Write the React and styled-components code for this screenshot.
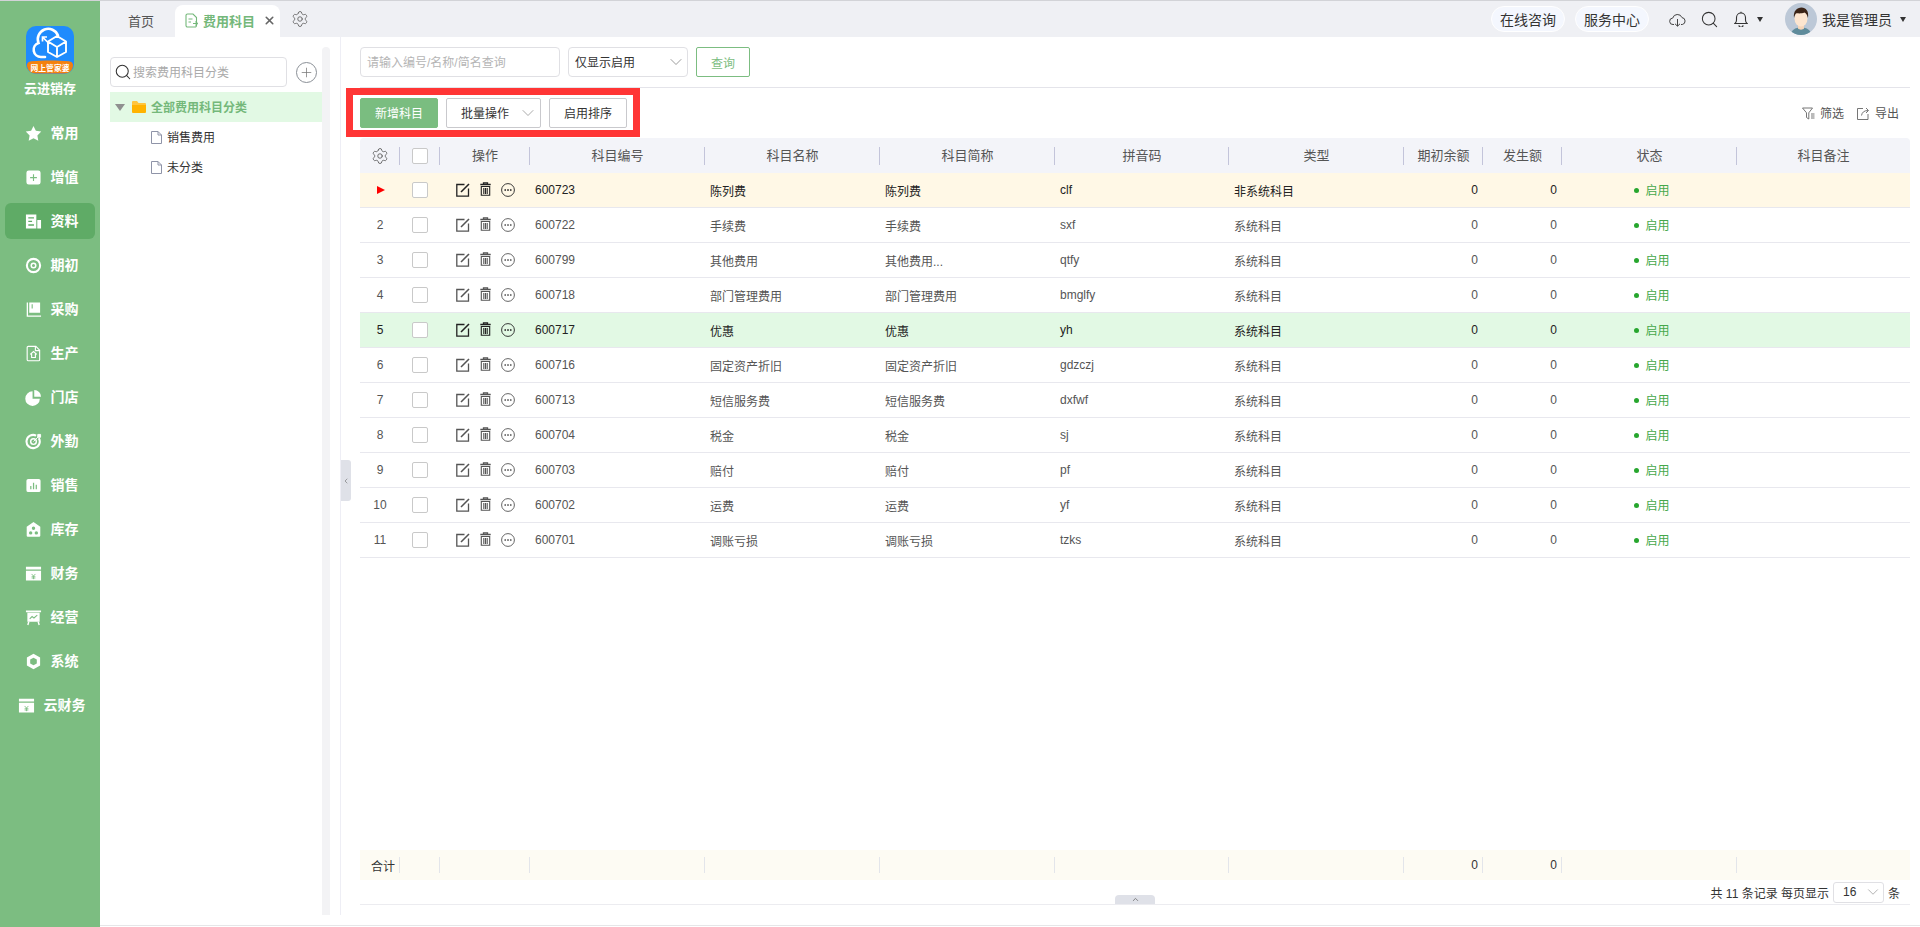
import React from "react";
import styled, { createGlobalStyle } from "styled-components";
import { ChevronDown, ChevronLeft, ChevronUp, Settings, Search, X, Plus } from "lucide-react";

const GlobalStyle = createGlobalStyle`
  html, body {
    margin: 0;
    padding: 0;
    background: #fff;
    overflow: hidden;
  }
  * {
    box-sizing: border-box;
  }
  body {
    font-family: "Liberation Sans", "Noto Sans CJK SC", sans-serif;
    font-size: 12px;
    color: #333;
  }
`;

const Page = styled.div`
  display: flex;
  width: 1920px;
  height: 927px;
  border-top: 1px solid #d2d3d7;
  overflow: hidden;
`;

const Sidebar = styled.aside`
  width: 100px;
  flex-shrink: 0;
  display: flex;
  flex-direction: column;
  align-items: center;
  background: #7cbd81;
  padding-top: 25px;
`;

const LogoName = styled.div`
  margin-top: 5px;
  margin-bottom: 12px;
  height: 20px;
  line-height: 20px;
  font-size: 13px;
  font-weight: 700;
  color: #fff;
`;

const NavItem = styled.div`
  width: 90px;
  height: 36px;
  margin: 4px 0;
  padding: 0 0 2px 3px;
  display: flex;
  align-items: center;
  justify-content: center;
  gap: 9px;
  border-radius: 6px;
  color: #fff;
  font-size: 14px;
  font-weight: 700;
  background: ${(props) => (props.$active ? "#5fab66" : "transparent")};
  & svg {
    margin-top: 2px;
  }
`;

const Main = styled.div`
  flex: 1;
  min-width: 0;
  display: flex;
  flex-direction: column;
`;

const TopBar = styled.header`
  height: 36px;
  flex-shrink: 0;
  display: flex;
  align-items: flex-end;
  padding-left: 28px;
  background: #eff0f4;
`;

const Tab = styled.div`
  height: 32px;
  display: flex;
  align-items: center;
  font-size: 13px;
  color: #555;
  padding-bottom: 1px;
`;

const ActiveTab = styled(Tab)`
  width: 105px;
  margin-left: 21px;
  padding-left: 10px;
  background: #fff;
  border-radius: 8px 8px 0 0;
  color: #74b87a;
  font-weight: 700;
  gap: 5px;
`;

const TabClose = styled.span`
  display: flex;
  margin-left: 3px;
  color: #666;
`;

const TabGear = styled.div`
  display: flex;
  height: 36px;
  align-items: center;
  margin-left: 11px;
  color: #666;
`;

const TopRight = styled.div`
  margin-left: auto;
  height: 36px;
  display: flex;
  align-items: center;
  color: #333;
`;

const Pill = styled.div`
  width: 74px;
  height: 26px;
  margin-right: 10px;
  display: flex;
  align-items: center;
  justify-content: center;
  border: 1px solid #fff;
  border-radius: 13px;
  background: #f4f7fe;
  font-size: 14px;
`;

const TopIcon = styled.span`
  display: flex;
  margin-left: ${(props) => props.$left || 0}px;
`;

const Caret = styled.span`
  width: 0;
  height: 0;
  margin-left: ${(props) => props.$left}px;
  border-left: 3.5px solid transparent;
  border-right: 3.5px solid transparent;
  border-top: 5px solid #333;
`;

const UserName = styled.span`
  margin-left: 5px;
  font-size: 14px;
`;

const Content = styled.div`
  position: relative;
  height: 878px;
  flex-shrink: 0;
  display: flex;
`;

const BottomStrip = styled.div`
  height: 11px;
  flex-shrink: 0;
  border-bottom: 1px solid #e6e6e8;
`;

const TreePanel = styled.div`
  width: 241px;
  flex-shrink: 0;
  display: flex;
  padding: 10px 10px 0 10px;
  border-right: 1px solid #eeeef5;
`;

const TreeBody = styled.div`
  width: 212px;
  padding-top: 10px;
`;

const ScrollTrack = styled.div`
  width: 8px;
  background: #f3f3f5;
  border-radius: 4px 4px 0 0;
`;

const TreeSearchRow = styled.div`
  display: flex;
  align-items: center;
  height: 30px;
  gap: 9px;
`;

const TreeSearch = styled.div`
  width: 177px;
  height: 30px;
  display: flex;
  align-items: center;
  gap: 1px;
  padding: 0 0 2px 3px;
  border: 1px solid #e0e0e4;
  border-radius: 4px;
  color: #aaa;
  & svg {
    margin-top: 2px;
  }
`;

const AddCircle = styled.div`
  width: 21px;
  height: 21px;
  display: flex;
  align-items: center;
  justify-content: center;
  border: 1.3px solid #8a8f96;
  border-radius: 50%;
  color: #777;
`;

const TreeRow = styled.div`
  height: 30px;
  display: flex;
  align-items: center;
  padding-left: ${(props) => props.$indent}px;
  padding-bottom: 2px;
  gap: 5px;
  color: ${(props) => (props.$selected ? "#74b87a" : "#333")};
  font-weight: ${(props) => (props.$selected ? 700 : 400)};
  background: ${(props) => (props.$selected ? "#e2f9e4" : "transparent")};
  & svg {
    margin-top: 2px;
  }
`;

const TreeRowFirst = styled(TreeRow)`
  margin-top: 5px;
`;

const TreeCaret = styled.span`
  width: 0;
  height: 0;
  margin: 2px 2px 0 0;
  border-left: 5px solid transparent;
  border-right: 5px solid transparent;
  border-top: 7px solid #8f8f8f;
`;

const CollapseHandle = styled.div`
  position: absolute;
  left: 241px;
  top: 423px;
  width: 10px;
  height: 41px;
  display: flex;
  align-items: center;
  justify-content: center;
  background: #dfe1e8;
  border-radius: 0 3px 3px 0;
  color: #777;
`;

const ListPanel = styled.div`
  flex: 1;
  min-width: 0;
  display: flex;
  flex-direction: column;
  padding: 0 10px 10px 19px;
`;

const FilterBar = styled.div`
  height: 51px;
  flex-shrink: 0;
  display: flex;
  align-items: flex-start;
  padding-top: 10px;
  gap: 8px;
  border-bottom: 1px solid #e4e4ea;
`;

const SearchInput = styled.div`
  width: 200px;
  height: 30px;
  display: flex;
  align-items: center;
  padding: 0 0 2px 6px;
  border: 1px solid #e0e0e4;
  border-radius: 4px;
  color: #b5b5b5;
`;

const SelectBox = styled.div`
  width: 120px;
  height: 30px;
  display: flex;
  align-items: center;
  justify-content: space-between;
  padding: 0 1px 2px 6px;
  border: 1px solid #e0e0e4;
  border-radius: 4px;
  color: #333;
  & svg {
    margin-top: 2px;
    color: #888;
  }
`;

const QueryButton = styled.div`
  width: 54px;
  height: 30px;
  display: flex;
  align-items: center;
  justify-content: center;
  border: 1px solid #7cbd81;
  border-radius: 2px;
  color: #7cbd81;
`;

const Toolbar = styled.div`
  position: relative;
  height: 50px;
  flex-shrink: 0;
  display: flex;
  align-items: center;
  gap: 8px;
`;

const RedFrame = styled.div`
  position: absolute;
  left: -14px;
  top: 0;
  width: 294px;
  height: 49px;
  border: 7px solid #ff3535;
  pointer-events: none;
`;

const ToolButton = styled.div`
  width: ${(props) => props.$width}px;
  height: 30px;
  display: flex;
  align-items: center;
  justify-content: center;
  padding-bottom: 2px;
  border: 1px solid ${(props) => (props.$primary ? "#7abd80" : "#c9c9cd")};
  border-radius: 2px;
  background: ${(props) => (props.$primary ? "#7abd80" : "#fff")};
  color: ${(props) => (props.$primary ? "#fff" : "#333")};
`;

const ToolSelect = styled(ToolButton)`
  justify-content: flex-start;
  gap: 9px;
  padding-left: 14px;
  & svg {
    margin-top: 2px;
    color: #999;
  }
`;

const ToolLinks = styled.div`
  margin-left: auto;
  display: flex;
  align-items: center;
  margin-right: 11px;
  padding-bottom: 2px;
  color: #555;
  & svg {
    margin-top: 2px;
  }
`;

const ToolLink = styled.span`
  display: flex;
  align-items: center;
  gap: 5px;
  margin-left: 13px;
`;

const columns = "40px 40px 90px 175px 175px 175px 174px 175px 79px 79px 175px 1fr";

const TableHead = styled.div`
  height: 35px;
  flex-shrink: 0;
  display: grid;
  grid-template-columns: ${columns};
  align-items: center;
  background: #f3f4f9;
  border-radius: 4px 4px 0 0;
  font-size: 13px;
  color: #555;
`;

const HeadCell = styled.div`
  position: relative;
  height: 18px;
  line-height: 18px;
  display: flex;
  align-items: center;
  justify-content: center;
  &:not(:last-child)::after {
    content: "";
    position: absolute;
    right: 0;
    top: 0;
    width: 1px;
    height: 18px;
    background: #c3c4da;
  }
`;

const TableBody = styled.div`
  flex: 1;
  min-height: 0;
`;

const Row = styled.div`
  height: 35px;
  display: grid;
  grid-template-columns: ${columns};
  align-items: center;
  border-bottom: 1px solid #e8e8ee;
  color: ${(props) => (props.$tone ? "#222" : "#555")};
  background: ${(props) =>
    props.$tone === "current" ? "#fff8e6" : props.$tone === "picked" ? "#e2f9e4" : "#fff"};
`;

const Cell = styled.div`
  padding: 0 ${(props) => (props.$align === "right" ? 5 : 0)}px 0
    ${(props) => (props.$align === "left" ? 5 : 0)}px;
  display: flex;
  align-items: center;
  justify-content: ${(props) =>
    props.$align === "right" ? "flex-end" : props.$align === "left" ? "flex-start" : "center"};
  white-space: nowrap;
`;

const Checkbox = styled.span`
  width: 16px;
  height: 16px;
  border: 1px solid #c9c9c9;
  border-radius: 2px;
  background: #fff;
`;

const Pointer = styled.span`
  width: 0;
  height: 0;
  margin-left: 1px;
  border-top: 4px solid transparent;
  border-bottom: 4px solid transparent;
  border-left: 8px solid #f00;
`;

const Actions = styled.div`
  display: flex;
  align-items: center;
  gap: 10px;
  padding-left: 16px;
  color: ${(props) => (props.$tone ? "#222" : "#555")};
  & svg:nth-child(2) {
    margin-top: -2px;
  }
`;

const StatusText = styled.span`
  display: flex;
  align-items: center;
  gap: 6px;
  padding: 0 0 2px 5px;
  color: #45a84b;
`;

const StatusDot = styled.i`
  width: 5px;
  height: 5px;
  margin-top: 2px;
  border-radius: 50%;
  background: #27a62e;
`;

const SumRow = styled.div`
  height: 30px;
  flex-shrink: 0;
  display: grid;
  grid-template-columns: ${columns};
  align-items: center;
  background: #fdfbf3;
  color: #333;
`;

const SumCell = styled(Cell)`
  position: relative;
  height: 16px;
  &:first-child {
    padding-left: 6px;
  }
  &:not(:last-child)::after {
    content: "";
    position: absolute;
    right: 0;
    top: 0;
    width: 1px;
    height: 16px;
    background: #e3e5ea;
  }
`;

const Pagination = styled.div`
  position: relative;
  height: 25px;
  flex-shrink: 0;
  display: flex;
  align-items: center;
  justify-content: flex-end;
  padding-right: 10px;
  border-bottom: 1px solid #ececf0;
  color: #333;
`;

const PageSize = styled.div`
  width: 51px;
  height: 21px;
  margin: 0 4px;
  display: flex;
  align-items: center;
  justify-content: space-between;
  padding: 0 1px 0 9px;
  border: 1px solid #e0e0e4;
  border-radius: 3px;
  & svg {
    color: #999;
  }
`;

const FoldHandle = styled.div`
  position: absolute;
  left: 755px;
  bottom: 0;
  width: 40px;
  height: 9px;
  display: flex;
  align-items: center;
  justify-content: center;
  background: #dfe1e8;
  border-radius: 4px 4px 0 0;
  color: #666;
`;

const NavGlyph = ({ children }) => (
  <svg width="17" height="17" viewBox="0 0 18 18" fill="#fff" fillRule="evenodd">
    {children}
  </svg>
);

const Yen = () => (
  <path d="M7 9.5l2 2.2 2-2.2M9 11.7V15M7 12.4h4M7 13.8h4" stroke="#7cbd81" strokeWidth="0.9" fill="none" />
);

const navItems = [
  { label: "常用", icon: <path d="M9 1l2.5 5.2 5.7.8-4.1 4 1 5.7L9 14l-5.1 2.7 1-5.7L.8 7l5.7-.8z" /> },
  {
    label: "增值",
    icon: <path d="M4 1.5h10A2.5 2.5 0 0 1 16.5 4v10a2.5 2.5 0 0 1-2.5 2.5H4A2.5 2.5 0 0 1 1.5 14V4A2.5 2.5 0 0 1 4 1.5zM8.4 5.5v3h-3v1.2h3v3h1.2v-3h3V8.5h-3v-3z" />,
  },
  {
    label: "资料",
    active: true,
    icon: <path d="M1 1.5h11v15H1zM3.5 4.5v1.4h6V4.5zM3.5 8.2v1.4h4V8.2zM3.5 12v1.4h6V12zM13 7.5h4v9h-4z" />,
  },
  {
    label: "期初",
    icon: (
      <>
        <circle cx="9" cy="9" r="7" fill="none" stroke="#fff" strokeWidth="2.2" />
        <circle cx="9" cy="9" r="2.4" fill="none" stroke="#fff" strokeWidth="1.6" />
      </>
    ),
  },
  {
    label: "采购",
    icon: (
      <>
        <path d="M4.5 1.5h11.500v11H4.500zM7 3.500v4.500h1.200V3.500z" />
        <path d="M2.500 1.500v14.500H17" fill="none" stroke="#fff" strokeWidth="1.4" />
      </>
    ),
  },
  {
    label: "生产",
    icon: (
      <g fill="none" stroke="#fff" strokeWidth="1.2">
        <path d="M3.500 1.500h8l4 4v10a1.200 1.200 0 0 1-1.200 1.200H3.500a1.200 1.200 0 0 1-1.200-1.200V2.700a1.200 1.200 0 0 1 1.200-1.200z" />
        <path d="M11 1.500v4.500h4.500M5.500 10l3.500-3 3.500 3M7 9.200v4h4v-4" />
      </g>
    ),
  },
  {
    label: "门店",
    icon: (
      <>
        <path d="M8 2.500a7.700 7.700 0 1 0 7.700 7.700H8z" />
        <path d="M9.800 1a7.200 7.200 0 0 1 7.200 7.200H9.800z" />
      </>
    ),
  },
  {
    label: "外勤",
    icon: (
      <>
        <path d="M14.600 5.400a7 7 0 1 1-2.800-2.600" fill="none" stroke="#fff" strokeWidth="2.2" />
        <circle cx="9" cy="9" r="3" fill="none" stroke="#fff" strokeWidth="1.5" />
        <path d="M9 9l6-6M13.500 1.500h3v3h-3z" stroke="#fff" strokeWidth="1" />
      </>
    ),
  },
  {
    label: "销售",
    icon: <path d="M3.500 2h11a2 2 0 0 1 2 2v10a2 2 0 0 1-2 2h-11a2 2 0 0 1-2-2V4a2 2 0 0 1 2-2zM5.500 9.500V13h1.300V9.500zM8.400 6v7h1.300V6zM11.300 8.300V13h1.300V8.300z" />,
  },
  {
    label: "库存",
    icon: (
      <path d="M9 1l7.200 5.200v9.300a1.200 1.200 0 0 1-1.200 1.200H3a1.200 1.200 0 0 1-1.200-1.200V6.200zM9 5.800a1.800 1.800 0 1 0 0 3.600 1.800 1.800 0 0 0 0-3.600zM6 10.800a1.800 1.800 0 1 0 0 3.600 1.800 1.800 0 0 0 0-3.600zM12 10.800a1.800 1.800 0 1 0 0 3.600 1.800 1.800 0 0 0 0-3.600z" />
    ),
  },
  {
    label: "财务",
    icon: (
      <>
        <path d="M1 1.800h16v3H1zM1 6h16v10.500H1z" />
        <Yen />
      </>
    ),
  },
  {
    label: "经营",
    icon: (
      <>
        <path d="M1 1.500h16v2H1zM2.500 4h13v9.500h-13z" />
        <path d="M5 10.500l2.500-2.500 2 1.500L13 6.500" fill="none" stroke="#7cbd81" strokeWidth="1.1" />
        <path d="M4 13.500l-1 3.500M14 13.500l1 3.500" stroke="#fff" strokeWidth="1.5" />
      </>
    ),
  },
  {
    label: "系统",
    icon: <path d="M9 .8l7 4v8.400l-7 4-7-4V4.800zM9 5L5.500 7v4L9 13l3.500-2V7z" />,
  },
  {
    label: "云财务",
    icon: (
      <>
        <path d="M1 1.800h16v3H1zM1 6h16v10.500H1z" />
        <Yen />
      </>
    ),
  },
];

const rows = [
  { no: "600723", name: "陈列费", short: "陈列费", py: "clf", type: "非系统科目", tone: "current" },
  { no: "600722", name: "手续费", short: "手续费", py: "sxf", type: "系统科目" },
  { no: "600799", name: "其他费用", short: "其他费用...", py: "qtfy", type: "系统科目" },
  { no: "600718", name: "部门管理费用", short: "部门管理费用", py: "bmglfy", type: "系统科目" },
  { no: "600717", name: "优惠", short: "优惠", py: "yh", type: "系统科目", tone: "picked" },
  { no: "600716", name: "固定资产折旧", short: "固定资产折旧", py: "gdzczj", type: "系统科目" },
  { no: "600713", name: "短信服务费", short: "短信服务费", py: "dxfwf", type: "系统科目" },
  { no: "600704", name: "税金", short: "税金", py: "sj", type: "系统科目" },
  { no: "600703", name: "赔付", short: "赔付", py: "pf", type: "系统科目" },
  { no: "600702", name: "运费", short: "运费", py: "yf", type: "系统科目" },
  { no: "600701", name: "调账亏损", short: "调账亏损", py: "tzks", type: "系统科目" },
];

const headers = ["", "", "操作", "科目编号", "科目名称", "科目简称", "拼音码", "类型", "期初余额", "发生额", "状态", "科目备注"];

const Logo = () => (
  <svg width="48" height="48" viewBox="0 0 48 48">
    <rect width="48" height="48" rx="10" fill="#1f8bfd" />
    <path d="M1 39c0-2 1.500-3.500 4-3.800 12-1 26-1 38 0 2.500.3 4 1.800 4 3.800 0 5-4 8.500-9 8.500H10c-5 0-9-3.500-9-8.500z" fill="#f4810e" />
    <path
      d="M19 31h-4a7.200 7.200 0 0 1-2.500-14A10 10 0 0 1 32 9.500"
      fill="none"
      stroke="#fff"
      strokeWidth="2.600"
      strokeLinecap="round"
    />
    <path d="M22 15.500l9-5.500 9 5.500V26l-9 5-9-5zM22 15.500l9 5.500 9-5.500M31 21v10" fill="none" stroke="#fff" strokeWidth="1.900" strokeLinejoin="round" />
    <path d="M21 11h-4.500v4.500M16.500 11l7 7" fill="none" stroke="#fff" strokeWidth="1.700" />
    <text x="24" y="44.500" textAnchor="middle" fontSize="7.800" fontWeight="700" fill="#fff">
      网上管家婆
    </text>
  </svg>
);

const Avatar = () => (
  <svg width="32" height="32" viewBox="0 0 32 32">
    <defs>
      <clipPath id="avatar-clip">
        <circle cx="16" cy="16" r="16" />
      </clipPath>
    </defs>
    <g clipPath="url(#avatar-clip)">
      <rect width="32" height="32" fill="#bcc8d7" />
      <path d="M6 32c0-5 4-7.500 10-7.500S26 27 26 32z" fill="#5f8b9b" />
      <path d="M13 21h6v4.500c-1 1.500-5 1.500-6 0z" fill="#f6d6ba" />
      <ellipse cx="16" cy="15.500" rx="6.500" ry="8" fill="#fde5cf" />
      <path d="M9 15c-1-7 3-10.500 7.500-10.500S24 8 23 15c-.8-3-2-5-3.500-5.500C16 11 12 10 11 10.500 10 11.500 9.500 13 9 15z" fill="#3b2417" />
    </g>
  </svg>
);

const FileTabIcon = () => (
  <svg width="13" height="15" viewBox="0 0 13 15" fill="none" stroke="#74b87a" strokeWidth="1.100">
    <path d="M8 1H2.500A1.500 1.500 0 0 0 1 2.500v10A1.500 1.500 0 0 0 2.500 14H10a1.500 1.500 0 0 0 1.500-1.500V4.500z" />
    <path d="M3.500 6h4M3.500 9h2.500M8 10.500h4M10.500 8.500l2 2-2 2" />
  </svg>
);

const CloudIcon = () => (
  <svg width="17" height="15" viewBox="0 0 17 15" fill="none" stroke="#444" strokeWidth="1">
    <path d="M5 12.500H4a3.200 3.200 0 0 1-.3-6.400A4.900 4.900 0 0 1 13 5.600a3.500 3.500 0 0 1 .3 6.900H12" />
    <path d="M8.500 7v7M6 11.800l2.500 2.400 2.500-2.400" />
  </svg>
);

const BellIcon = () => (
  <svg width="14" height="16" viewBox="0 0 14 16" fill="none" stroke="#333" strokeWidth="1.100">
    <path d="M1 12.500c1.200-1 1.500-2 1.500-3.500V6.500a4.500 4.500 0 0 1 9 0V9c0 1.500.3 2.500 1.500 3.500z" />
    <path d="M5 14.300a2 2 0 0 0 4 0M7 .8V2" />
  </svg>
);

const FolderIcon = () => (
  <svg width="14" height="12" viewBox="0 0 14 12">
    <path d="M0 1a1 1 0 0 1 1-1h4l1.500 2H13a1 1 0 0 1 1 1v1H0z" fill="#ffc53d" />
    <path d="M0 4h14v7a1 1 0 0 1-1 1H1a1 1 0 0 1-1-1z" fill="#ffb300" />
  </svg>
);

const PageIcon = () => (
  <svg width="11" height="13" viewBox="0 0 11 13" fill="none" stroke="#8f94a8" strokeWidth="1">
    <path d="M.5.500h6.500l3.500 3.500v8.500H.5z" />
    <path d="M7 .5V4h3.500" />
  </svg>
);

const EditIcon = () => (
  <svg width="14" height="14" viewBox="0 0 14 14" fill="none" stroke="currentColor" strokeWidth="1.300">
    <path d="M8.500 1.500H.8v11.700h11.700V5.500" />
    <path d="M5 9l8-8" strokeWidth="1.600" />
  </svg>
);

const TrashIcon = () => (
  <svg width="11" height="14" viewBox="0 0 11 14" fill="none" stroke="currentColor" strokeWidth="1.100">
    <path d="M3.500 2V.8h4V2M.3 2.500h10.400" strokeWidth="1.300" />
    <path d="M1.300 4.500h8.400v8.800H1.300zM3.800 6v6M5.500 6v6M7.200 6v6" />
  </svg>
);

const MoreIcon = () => (
  <svg width="14" height="14" viewBox="0 0 14 14" fill="none" stroke="currentColor" strokeWidth="0.900">
    <circle cx="7" cy="7" r="6.400" />
    <circle cx="4.200" cy="7" r="0.500" fill="currentColor" />
    <circle cx="7" cy="7" r="0.500" fill="currentColor" />
    <circle cx="9.800" cy="7" r="0.500" fill="currentColor" />
  </svg>
);

const FilterIcon = () => (
  <svg width="13" height="13" viewBox="0 0 13 13" fill="none" stroke="#666" strokeWidth="0.900">
    <path d="M.5 1h10L6.800 5.800V12L4.500 10.500V5.800zM9 7h3.500M9 9h3.500M9 11h3.500" />
  </svg>
);

const ExportIcon = () => (
  <svg width="13" height="13" viewBox="0 0 13 13" fill="none" stroke="#666" strokeWidth="0.900">
    <path d="M6 1.500H.5v11h10.500V7" />
    <path d="M4.500 8.500c.5-3 2.500-5 6.500-5M9 1l2.500 2.500L9 6" />
  </svg>
);

const App = () => {
  return (
    <>
      <GlobalStyle />
      <Page>
        <Sidebar>
          <Logo />
          <LogoName>云进销存</LogoName>
          {navItems.map((item) => (
            <NavItem key={item.label} $active={item.active}>
              <NavGlyph>{item.icon}</NavGlyph>
              {item.label}
            </NavItem>
          ))}
        </Sidebar>
        <Main>
          <TopBar>
            <Tab>首页</Tab>
            <ActiveTab>
              <FileTabIcon />
              费用科目
              <TabClose>
                <X size={13} strokeWidth={3} />
              </TabClose>
            </ActiveTab>
            <TabGear>
              <Settings size={18} strokeWidth={1.2} />
            </TabGear>
            <TopRight>
              <Pill>在线咨询</Pill>
              <Pill>服务中心</Pill>
              <TopIcon $left={10}>
                <CloudIcon />
              </TopIcon>
              <TopIcon $left={14}>
                <Search size={19} strokeWidth={1.3} />
              </TopIcon>
              <TopIcon $left={15}>
                <BellIcon />
              </TopIcon>
              <Caret $left={9} />
              <TopIcon $left={22}>
                <Avatar />
              </TopIcon>
              <UserName>我是管理员</UserName>
              <Caret $left={8} />
              <TopIcon $left={14} />
            </TopRight>
          </TopBar>
          <Content>
            <TreePanel>
              <TreeBody>
                <TreeSearchRow>
                  <TreeSearch>
                    <Search size={18} strokeWidth={1.4} color="#333" />
                    搜索费用科目分类
                  </TreeSearch>
                  <AddCircle>
                    <Plus size={15} strokeWidth={1.2} />
                  </AddCircle>
                </TreeSearchRow>
                <TreeRowFirst $indent={5} $selected>
                  <TreeCaret />
                  <FolderIcon />
                  全部费用科目分类
                </TreeRowFirst>
                <TreeRow $indent={41}>
                  <PageIcon />
                  销售费用
                </TreeRow>
                <TreeRow $indent={41}>
                  <PageIcon />
                  未分类
                </TreeRow>
              </TreeBody>
              <ScrollTrack />
            </TreePanel>
            <CollapseHandle>
              <ChevronLeft size={8} strokeWidth={2} />
            </CollapseHandle>
            <ListPanel>
              <FilterBar>
                <SearchInput>请输入编号/名称/简名查询</SearchInput>
                <SelectBox>
                  仅显示启用
                  <ChevronDown size={20} strokeWidth={1} />
                </SelectBox>
                <QueryButton>查询</QueryButton>
              </FilterBar>
              <Toolbar>
                <ToolButton $width={78} $primary>
                  新增科目
                </ToolButton>
                <ToolSelect $width={95}>
                  批量操作
                  <ChevronDown size={20} strokeWidth={1} />
                </ToolSelect>
                <ToolButton $width={78}>启用排序</ToolButton>
                <RedFrame />
                <ToolLinks>
                  <ToolLink>
                    <FilterIcon />
                    筛选
                  </ToolLink>
                  <ToolLink>
                    <ExportIcon />
                    导出
                  </ToolLink>
                </ToolLinks>
              </Toolbar>
              <TableHead>
                {headers.map((title, index) => (
                  <HeadCell key={index}>
                    {index === 0 && <Settings size={18} strokeWidth={1.1} />}
                    {index === 1 && <Checkbox />}
                    {title}
                  </HeadCell>
                ))}
              </TableHead>
              <TableBody>
                {rows.map((row, index) => (
                  <Row key={row.no} $tone={row.tone}>
                    <Cell>{index === 0 ? <Pointer /> : index + 1}</Cell>
                    <Cell>
                      <Checkbox />
                    </Cell>
                    <Actions $tone={row.tone}>
                      <EditIcon />
                      <TrashIcon />
                      <MoreIcon />
                    </Actions>
                    <Cell $align="left">{row.no}</Cell>
                    <Cell $align="left">{row.name}</Cell>
                    <Cell $align="left">{row.short}</Cell>
                    <Cell $align="left">{row.py}</Cell>
                    <Cell $align="left">{row.type}</Cell>
                    <Cell $align="right">0</Cell>
                    <Cell $align="right">0</Cell>
                    <Cell>
                      <StatusText>
                        <StatusDot />
                        启用
                      </StatusText>
                    </Cell>
                    <Cell />
                  </Row>
                ))}
              </TableBody>
              <SumRow>
                <SumCell>合计</SumCell>
                <SumCell />
                <SumCell />
                <SumCell />
                <SumCell />
                <SumCell />
                <SumCell />
                <SumCell />
                <SumCell $align="right">0</SumCell>
                <SumCell $align="right">0</SumCell>
                <SumCell />
                <SumCell />
              </SumRow>
              <Pagination>
                <FoldHandle>
                  <ChevronUp size={9} strokeWidth={2} />
                </FoldHandle>
                共 11 条记录 每页显示
                <PageSize>
                  16
                  <ChevronDown size={18} strokeWidth={1} />
                </PageSize>
                条
              </Pagination>
            </ListPanel>
          </Content>
          <BottomStrip />
        </Main>
      </Page>
    </>
  );
};

export default App;
